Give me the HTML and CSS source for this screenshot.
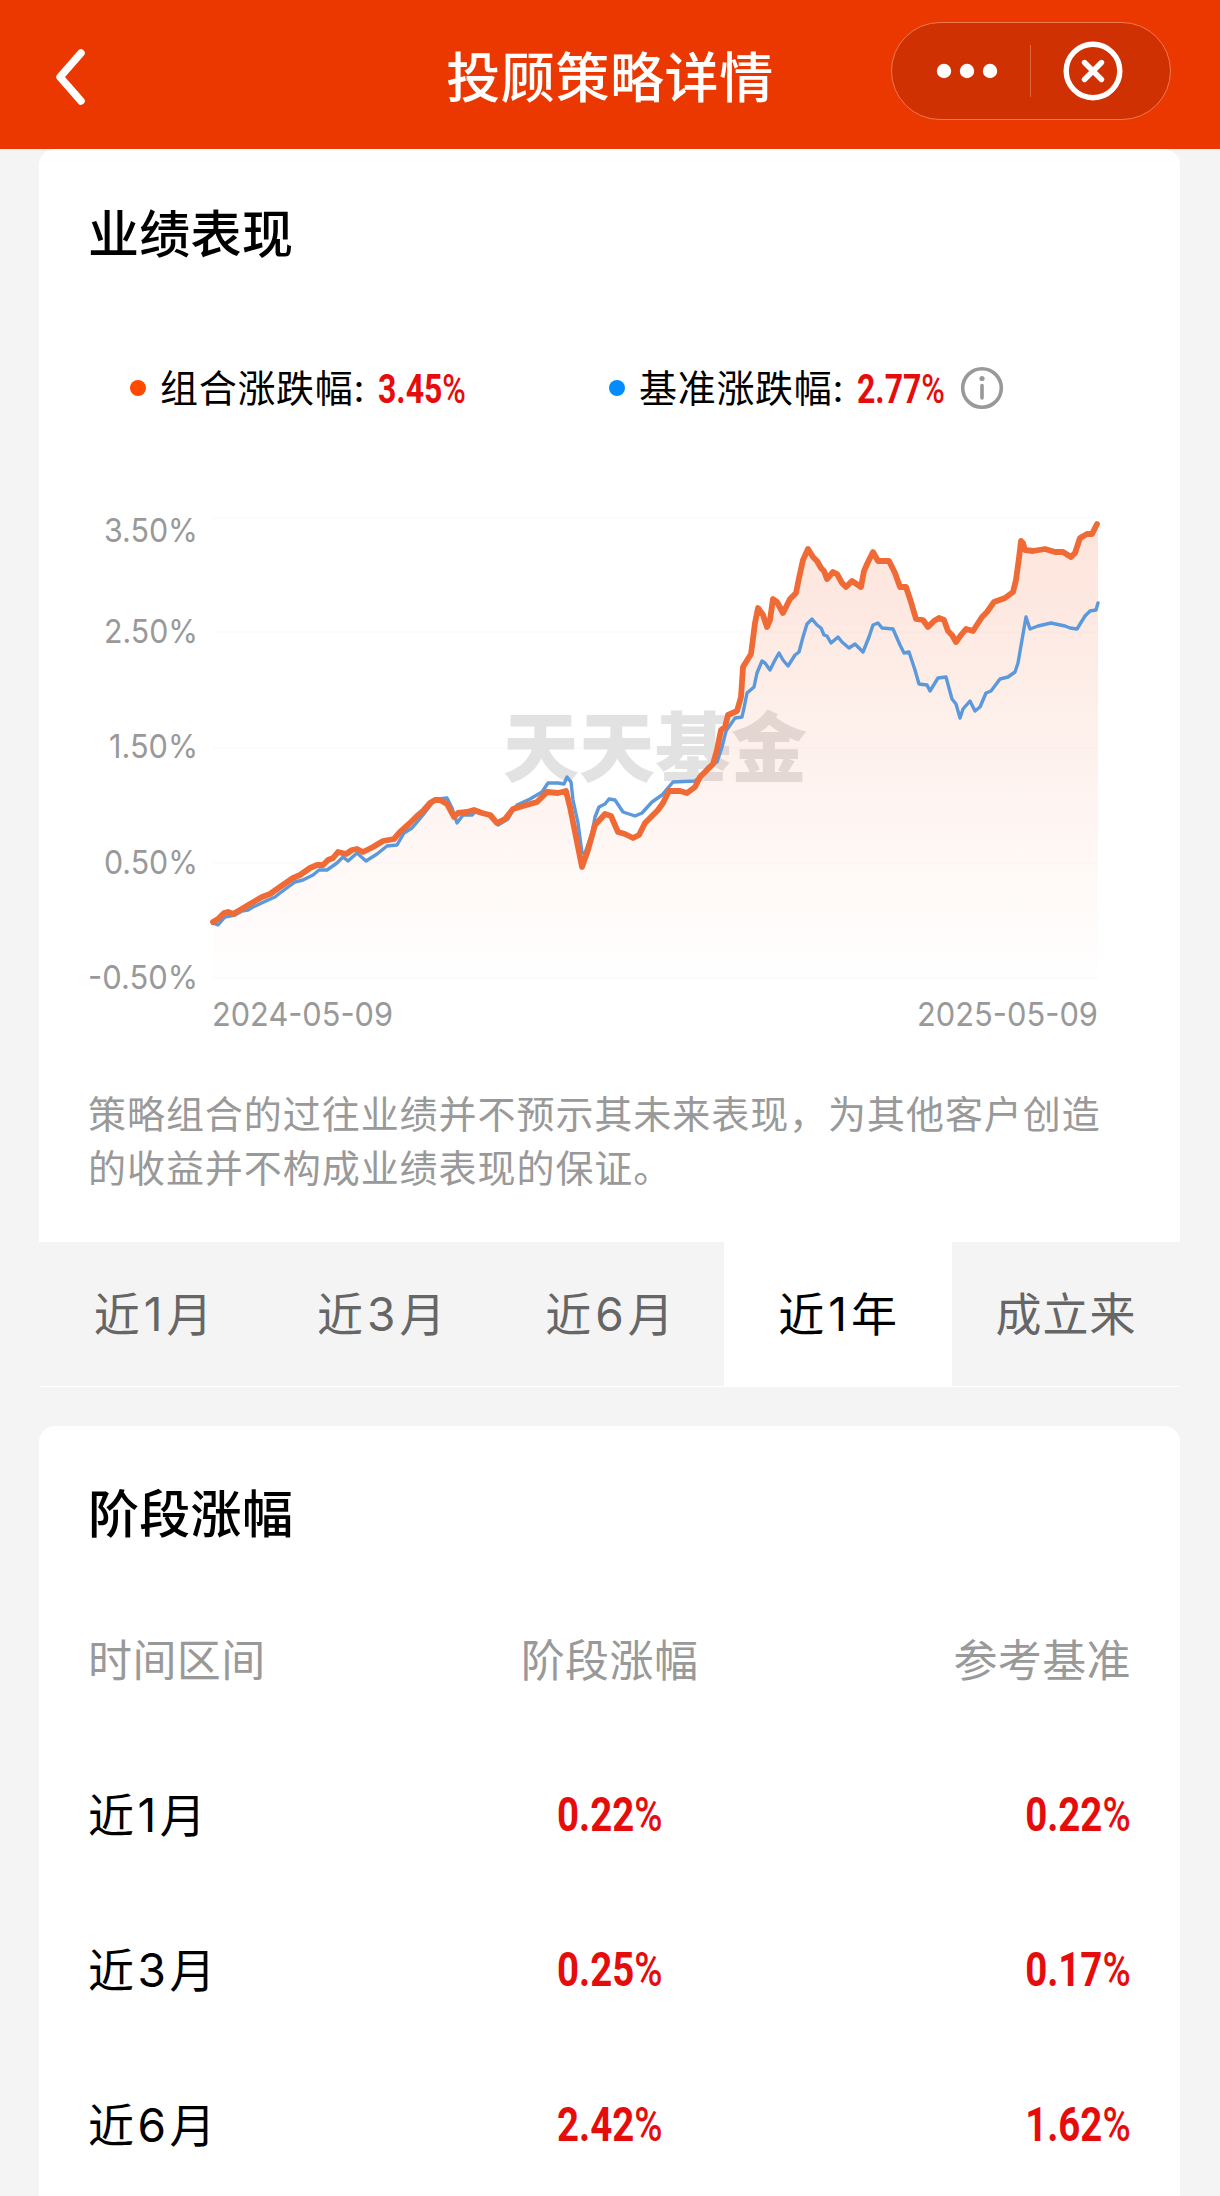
FILE: index.html
```html
<!DOCTYPE html>
<html lang="zh-CN">
	<head>
		<meta charset="UTF-8" />
		<meta name="viewport" content="width=device-width, initial-scale=1.0" />
		<title>投顾策略详情</title>

		<link rel="stylesheet" href="styles.css">
	</head>
	<body>
		<header class="header">
			<svg class="back" width="36" height="60" viewBox="0 0 36 60">
				<path d="M31 6 L10 30 L31 54" />
			</svg>
			<h1>投顾策略详情</h1>
			<div class="capsule">
				<svg class="dots" width="62" height="20" viewBox="0 0 62 20">
					<circle cx="8" cy="10" r="7.2" />
					<circle cx="31" cy="10" r="7.2" />
					<circle cx="54" cy="10" r="7.2" />
				</svg>
				<span class="line"></span>
				<svg class="close" width="60" height="60" viewBox="0 0 60 60">
					<circle cx="30" cy="30" r="26.8" />
					<path d="M21.5 21.5 L38.5 38.5 M38.5 21.5 L21.5 38.5" />
				</svg>
			</div>
		</header>

		<main>
			<section class="card performance">
				<h2>业绩表现</h2>

				<div class="legend">
					<div class="item">
						<i class="dot orange"></i>
						<span class="name">组合涨跌幅:</span>
						<span class="rate">3.45<small>%</small></span>
					</div>
					<div class="item">
						<i class="dot blue"></i>
						<span class="name">基准涨跌幅:</span>
						<span class="rate">2.77<small>%</small></span>
						<svg class="info" width="44" height="44" viewBox="0 0 44 44">
							<circle cx="22" cy="22" r="19.3" />
							<path d="M22 19.5 V32" />
							<circle class="point" cx="22" cy="12.5" r="2.6" />
						</svg>
					</div>
				</div>

				<svg class="chart" width="1060" height="560" viewBox="80 490 1060 560">
					<defs>
						<linearGradient id="area" gradientUnits="userSpaceOnUse" x1="0" y1="524" x2="0" y2="985">
							<stop offset="0" stop-color="#f2602c" stop-opacity="0.17" />
							<stop offset="1" stop-color="#f2602c" stop-opacity="0" />
						</linearGradient>
					</defs>

					<g class="grid">
						<path d="M212 518 H1098 M212 632 H1098 M212 748 H1098 M212 863 H1098 M212 978 H1098" />
					</g>

					<text class="watermark" x="503" y="776" textLength="304" lengthAdjust="spacingAndGlyphs">天天基金</text>

					<path class="fill" d="M213 922 L218 919 224 913 228 912 233 914 240 910 250 904 262 897 270 894 280 887 293 878 300 875 310 868 317 865 323 865 328 860 333 858 338 852 346 854 352 850 357 849 363 852 373 847 383 841 394 839 400 832 410 823 417 816 423 811 430 803 435 800 440 800 447 804 454 817 458 813 467 812 474 810 482 813 490 815 497 823 505 819 513 809 523 806 537 802 547 792 558 793 566 791 570 807 577 842 582 867 588 850 595 825 605 814 611 816 618 832 625 834 633 838 639 835 645 823 652 816 658 810 663 803 669 791 680 791 687 793 695 787 700 777 707 770 713 764 717 750 721 730 725 727 728 715 737 711 741 697 743 667 751 654 755 623 758 608 763 615 767 627 770 620 773 599 777 602 783 613 790 599 796 593 799 578 803 560 808 549 813 557 817 561 821 568 824 571 827 579 833 572 837 574 842 583 846 587 852 581 861 587 864 571 868 562 873 552 878 561 889 561 895 573 900 587 906 587 911 602 916 619 923 620 928 627 934 621 939 618 944 620 948 631 952 635 956 642 961 635 966 629 973 631 982 617 987 612 994 602 1005 598 1013 592 1016 580 1019 558 1021 541 1023 543 1025 550 1033 551 1045 549 1055 552 1063 552 1071 557 1075 553 1080 538 1087 534 1092 534 1095 528 1098 524 V985 H213 Z" />

					<polyline class="base" points="213,923 218,925 225,917 235,915 242,911 248,910 253,907 268,900 275,897 280,893 295,882 303,880 313,875 319,870 327,870 337,863 343,857 348,861 357,853 366,861 377,854 387,846 397,845 404,833 412,828 423,815 433,802 438,799 447,798 452,808 457,823 463,815 472,815 475,812 492,815 498,825 508,819 513,810 517,805 530,799 542,792 548,783 558,783 564,784 567,777 571,782 573,800 578,823 582,853 585,853 592,833 595,817 599,807 605,804 609,799 615,800 623,812 635,816 642,813 652,802 662,795 673,782 695,781 702,775 708,767 717,762 722,747 726,731 735,718 742,717 744,708 747,693 754,687 757,673 762,661 765,663 770,670 775,660 779,653 783,660 788,666 795,655 799,652 803,637 807,624 812,619 817,625 821,628 824,635 827,636 831,643 838,637 842,642 849,648 855,644 863,652 869,637 873,625 878,623 882,628 893,629 900,645 904,653 909,652 915,670 919,684 927,685 930,691 938,678 946,677 952,699 956,704 960,718 963,709 970,701 975,711 980,707 986,693 991,691 1000,679 1008,677 1015,672 1018,663 1022,640 1026,617 1030,629 1038,626 1051,623 1065,626 1070,628 1077,629 1085,616 1090,611 1096,610 1098,603" />

					<polyline class="combo" points="213,922 218,919 224,913 228,912 233,914 240,910 250,904 262,897 270,894 280,887 293,878 300,875 310,868 317,865 323,865 328,860 333,858 338,852 346,854 352,850 357,849 363,852 373,847 383,841 394,839 400,832 410,823 417,816 423,811 430,803 435,800 440,800 447,804 454,817 458,813 467,812 474,810 482,813 490,815 497,823 505,819 513,809 523,806 537,802 547,792 558,793 566,791 570,807 577,842 582,867 588,850 595,825 605,814 611,816 618,832 625,834 633,838 639,835 645,823 652,816 658,810 663,803 669,791 680,791 687,793 695,787 700,777 707,770 713,764 717,750 721,730 725,727 728,715 737,711 741,697 743,667 751,654 755,623 758,608 763,615 767,627 770,620 773,599 777,602 783,613 790,599 796,593 799,578 803,560 808,549 813,557 817,561 821,568 824,571 827,579 833,572 837,574 842,583 846,587 852,581 861,587 864,571 868,562 873,552 878,561 889,561 895,573 900,587 906,587 911,602 916,619 923,620 928,627 934,621 939,618 944,620 948,631 952,635 956,642 961,635 966,629 973,631 982,617 987,612 994,602 1005,598 1013,592 1016,580 1019,558 1021,541 1023,543 1025,550 1033,551 1045,549 1055,552 1063,552 1071,557 1075,553 1080,538 1087,534 1092,534 1095,528 1097,524" />

					<g class="axis">
						<text x="104" y="542" textLength="94" lengthAdjust="spacingAndGlyphs">3.50%</text>
						<text x="104" y="643" textLength="94" lengthAdjust="spacingAndGlyphs">2.50%</text>
						<text x="109" y="758" textLength="89" lengthAdjust="spacingAndGlyphs">1.50%</text>
						<text x="104" y="874" textLength="94" lengthAdjust="spacingAndGlyphs">0.50%</text>
						<text x="88" y="989" textLength="110" lengthAdjust="spacingAndGlyphs">-0.50%</text>
						<text x="212" y="1026" textLength="181" lengthAdjust="spacingAndGlyphs">2024-05-09</text>
						<text x="917" y="1026" textLength="181" lengthAdjust="spacingAndGlyphs">2025-05-09</text>
					</g>
				</svg>

				<p class="tip">策略组合的过往业绩并不预示其未来表现，为其他客户创造的收益并不构成业绩表现的保证。</p>
			</section>

			<ul class="tabs">
				<li>近1月</li>
				<li>近3月</li>
				<li>近6月</li>
				<li class="active">近1年</li>
				<li class="since">成立来</li>
			</ul>

			<section class="card stage">
				<h2>阶段涨幅</h2>

				<div class="row head">
					<span>时间区间</span>
					<span>阶段涨幅</span>
					<span>参考基准</span>
				</div>
				<div class="row">
					<span class="period">近1月</span>
					<span class="rate">0.22<small>%</small></span>
					<span class="rate">0.22<small>%</small></span>
				</div>
				<div class="row">
					<span class="period">近3月</span>
					<span class="rate">0.25<small>%</small></span>
					<span class="rate">0.17<small>%</small></span>
				</div>
				<div class="row">
					<span class="period">近6月</span>
					<span class="rate">2.42<small>%</small></span>
					<span class="rate">1.62<small>%</small></span>
				</div>
			</section>
		</main>
	</body>
</html>
```
FILE: styles.css
```css
* {
	padding: 0;
	margin: 0;
	box-sizing: border-box;
}
ul {
	list-style: none;
}

body {
	width: 1220px;
	height: 2196px;
	overflow: hidden;
	background-color: #f4f4f4;
	color: #000;
	font-family: "Inter", "Noto Sans CJK SC", sans-serif;
}

.header {
	display: grid;
	grid-template-columns: 330px 1fr 330px;
	align-items: center;
	height: 149px;
	background-color: #ea3800;
	color: #fff;
}
.header h1 {
	padding-top: 8px;
	font-size: 54px;
	font-weight: 500;
	line-height: 80px;
	letter-spacing: 0.6px;
	text-align: center;
}
.back {
	margin: 5px 0 0 50px;
}
.back path {
	fill: none;
	stroke: #fff;
	stroke-width: 7.5;
	stroke-linecap: round;
	stroke-linejoin: round;
}
.capsule {
	display: flex;
	align-items: center;
	width: 280px;
	height: 98px;
	margin: -8px 0 0 1px;
	border: 1px solid #f07a52;
	border-radius: 49px;
	background-color: #cf3103;
}
.dots {
	margin-left: 44px;
	fill: #fff;
}
.line {
	width: 1px;
	height: 52px;
	margin: 0 32px 0 32px;
	background-color: #e0673f;
}
.close {
	fill: none;
	stroke: #fff;
	stroke-width: 5.4;
	stroke-linecap: round;
}

main {
	padding: 0 40px 0 39px;
}
.card {
	padding: 0 49px;
	background-color: #fff;
}
h2 {
	font-size: 51px;
	font-weight: 500;
	line-height: 70px;
	letter-spacing: 0.3px;
}
.performance {
	height: 1093px;
	padding-top: 51px;
	border-radius: 16px 16px 0 0;
}

.legend {
	display: flex;
	height: 60px;
	margin-top: 88px;
	padding-left: 42px;
}
.item {
	display: flex;
	align-items: center;
	width: 479px;
	font-size: 38px;
	line-height: 60px;
}
.dot {
	width: 16px;
	height: 16px;
	margin-right: 14px;
	border-radius: 50%;
}
.dot.orange {
	background-color: #ff4a00;
}
.dot.blue {
	background-color: #038bff;
}
.name {
	width: 218px;
	letter-spacing: 0.7px;
	white-space: nowrap;
}
.rate {
	color: #e60c0c;
	font-family: Roboto, sans-serif;
	font-size: 40px;
	font-weight: 700;
	transform: scaleX(0.8);
	transform-origin: left center;
}
.rate small {
	font-size: 1em;
	font-weight: 500;
}
.legend .rate {
	padding-top: 3px;
}
.info {
	margin-left: -7px;
	fill: none;
	stroke: #999;
	stroke-width: 3.6;
	stroke-linecap: round;
}
.info .point {
	fill: #999;
	stroke: none;
}

.chart {
	display: block;
	margin: 72px 0 0 -8px;
}
.grid path {
	stroke: #fcfcfc;
	stroke-width: 2;
}
.watermark {
	fill: #e2e2e2;
	font-family: "Noto Sans CJK SC", sans-serif;
	font-size: 76px;
	font-weight: 900;
}
.fill {
	fill: url(#area);
}
.base,
.combo {
	fill: none;
	stroke-linejoin: round;
	stroke-linecap: round;
}
.base {
	stroke: #5b98dc;
	stroke-width: 3.4;
}
.combo {
	stroke: #f06a35;
	stroke-width: 5.8;
}
.axis {
	fill: #999;
	font-size: 33px;
}

.tip {
	width: 1026px;
	margin-top: 37px;
	color: #999;
	font-size: 38px;
	line-height: 54px;
	letter-spacing: 0.95px;
}

.tabs {
	display: flex;
	height: 145px;
}
.tabs li {
	flex: 1;
	color: #666;
	font-size: 46px;
	line-height: 145px;
	letter-spacing: 4px;
	text-indent: 4px;
	text-align: center;
	border-bottom: 1px solid #fff;
}
.tabs .since {
	letter-spacing: 1px;
	text-indent: 0;
}
.tabs .active {
	background-color: #fff;
	color: #000;
}

.stage {
	height: 790px;
	margin-top: 39px;
	padding-top: 54px;
	border-radius: 16px;
}
.row {
	display: grid;
	grid-template-columns: 1fr 1fr 1fr;
	align-items: center;
	height: 155px;
	font-size: 46px;
}
.row span:nth-child(2) {
	text-align: center;
	transform-origin: center;
}
.row span:nth-child(3) {
	text-align: right;
	transform-origin: right center;
}
.row .period {
	letter-spacing: 3.5px;
}
.row .rate {
	padding-top: 5px;
	font-size: 48px;
}
.row.head {
	height: 153px;
	margin-top: 31px;
	color: #999;
	font-size: 44px;
	letter-spacing: 0.4px;
}
```
